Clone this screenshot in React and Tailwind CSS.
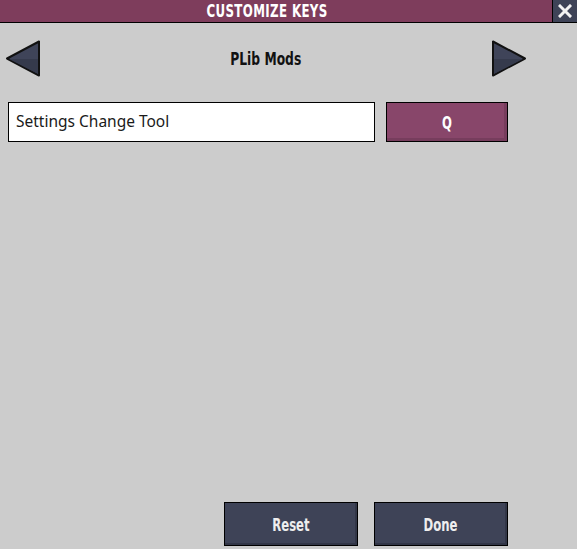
import React from "react";

const gameFont = { fontFamily: '"DejaVu Sans Condensed", "DejaVu Sans", sans-serif' };

const Arrow = ({ dir }) => (
  <svg width="36" height="37" viewBox="0 0 36 37">
    {dir === "left" ? (
      <>
        <polygon points="34,1.5 34,35.5 2,18.5" fill="#3f4459" stroke="#111" strokeWidth="2" strokeLinejoin="round" />
        <polygon points="33,19 33,34 4,19" fill="#353a4c" />
      </>
    ) : (
      <>
        <polygon points="2,1.5 2,35.5 34,18.5" fill="#3f4459" stroke="#111" strokeWidth="2" strokeLinejoin="round" />
        <polygon points="3,19 3,34 32,19" fill="#353a4c" />
      </>
    )}
  </svg>
);

const DarkButton = ({ children }) => (
  <button
    className="w-[134px] h-[44px] bg-[#3e4357] border border-black text-[#eeeeee] font-bold text-[18px] shadow-[inset_-2px_-2px_0_rgba(0,0,0,0.18)]"
    style={gameFont}
  >
    <span className="inline-block scale-x-[0.72]">{children}</span>
  </button>
);

export default function App() {
  return (
    <div className="w-[577px] h-[549px] bg-[#cccccc] flex flex-col overflow-hidden">
      <div className="h-[23px] flex bg-[#7e3d5c] border-b border-black shrink-0">
        <div className="flex-1 flex items-center justify-center pr-[18px]">
          <span
            className="inline-block scale-x-[0.73] text-white font-bold text-[18px] leading-none tracking-[0.5px]"
            style={gameFont}
          >
            CUSTOMIZE KEYS
          </span>
        </div>
        <button className="w-[25px] h-full bg-[#3e4357] border-l border-black flex items-center justify-center">
          <svg width="14" height="14" viewBox="0 0 14 14">
            <path d="M2 2 L12 12 M12 2 L2 12" stroke="#f2f2f2" strokeWidth="3" strokeLinecap="square" />
          </svg>
        </button>
      </div>

      <div className="flex items-center justify-between ml-[5px] w-[522px] mt-[17px]">
        <Arrow dir="left" />
        <span className="inline-block scale-x-[0.76] font-bold text-[18px] text-[#111]" style={gameFont}>
          PLib Mods
        </span>
        <Arrow dir="right" />
      </div>

      <div className="flex ml-[8px] mt-[25px] gap-[11px]">
        <div className="w-[367px] h-[40px] bg-white border border-black flex items-center px-[7px]">
          <span className="text-[15.5px] text-[#1a1a1a]" style={{ fontFamily: '"Noto Sans", sans-serif' }}>
            Settings Change Tool
          </span>
        </div>
        <button
          className="w-[122px] h-[40px] bg-[#88466a] border border-black text-white font-bold text-[18px] shadow-[inset_-3px_-3px_0_rgba(0,0,0,0.12)]"
          style={gameFont}
        >
          <span className="inline-block scale-x-[0.72]">Q</span>
        </button>
      </div>

      <div className="mt-auto mb-[3px] flex justify-end gap-[16px] pr-[69px]">
        <DarkButton>Reset</DarkButton>
        <DarkButton>Done</DarkButton>
      </div>
    </div>
  );
}
